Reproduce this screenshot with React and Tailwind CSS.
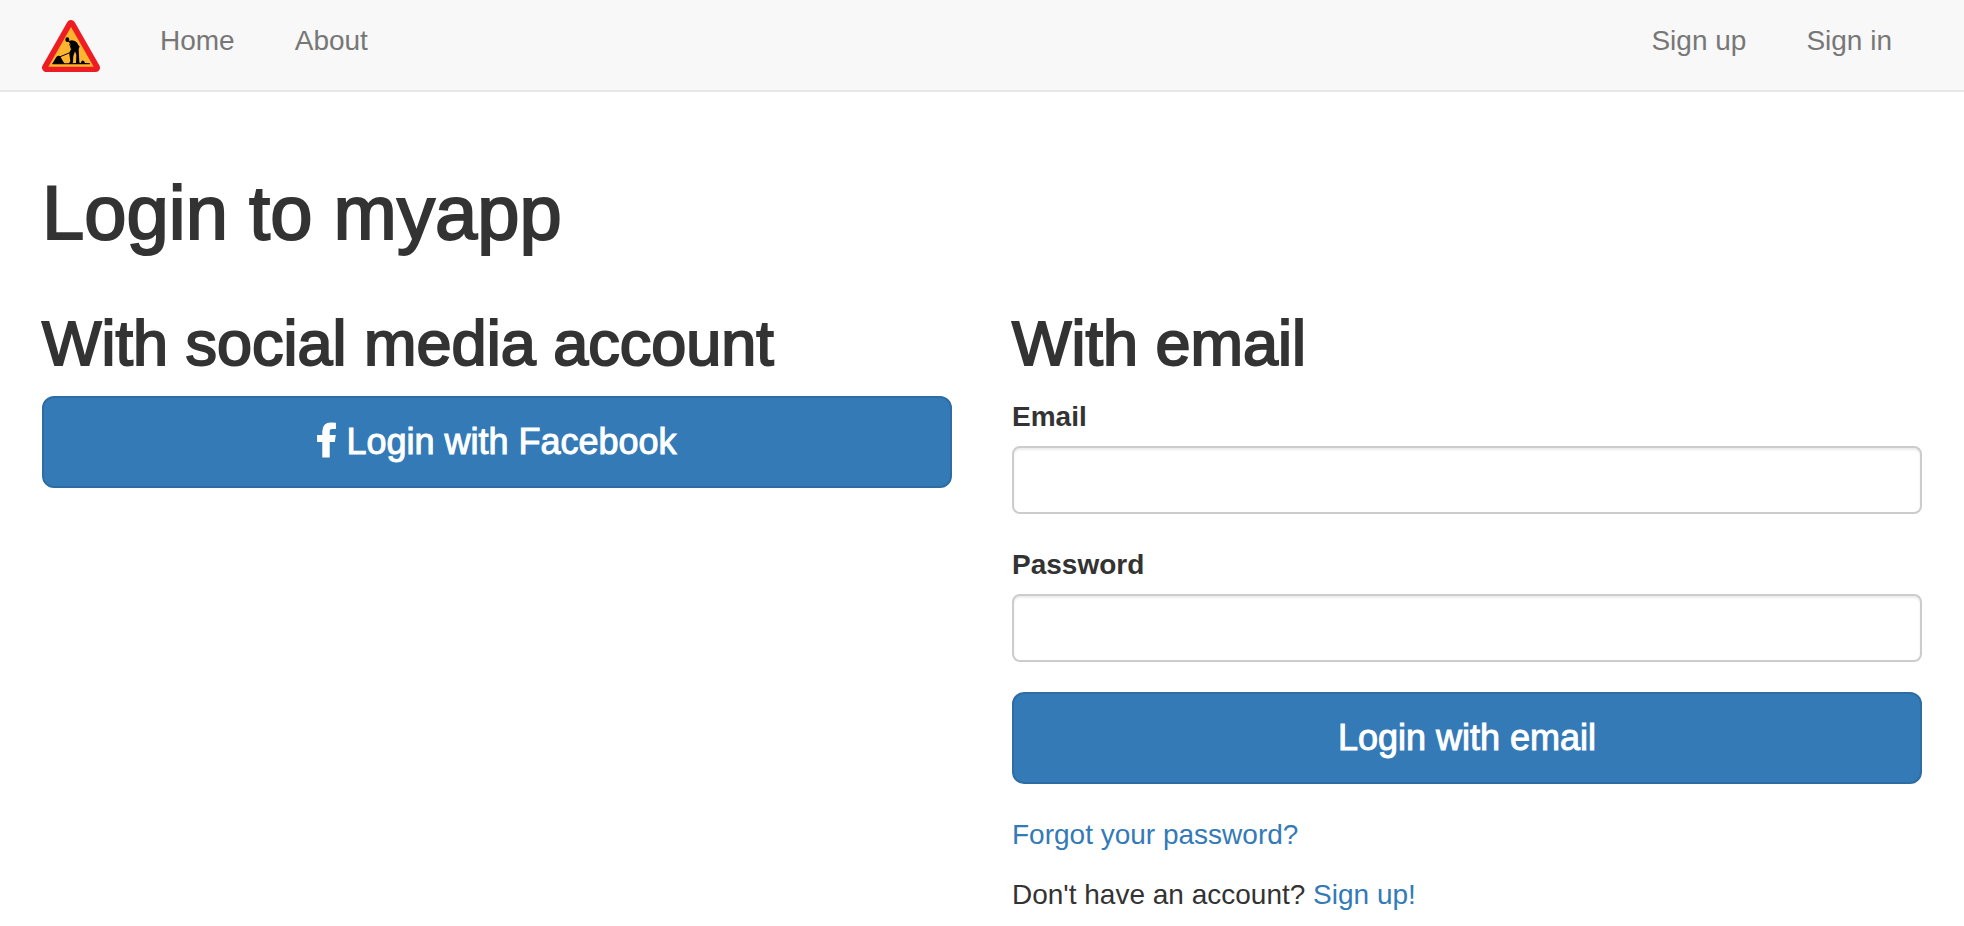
const linkClass = "text-[#337ab7] hover:underline";
const navLinkClass = "block pt-[21px] pb-[19px] text-[#777777] hover:text-[#333333]";
const headingClass = "text-[63px] leading-[66px] font-normal [-webkit-text-stroke:2px_#333333]";
const labelClass = "block font-bold pt-px mb-[9px]";
const inputClass =
  "block w-full h-[68px] px-6 rounded-lg border-2 border-[#cccccc] bg-white shadow-[inset_0_2px_2px_rgba(0,0,0,0.075)] outline-none focus:border-[#66afe9]";
const buttonClass =
  "flex w-full h-[92px] items-center justify-center gap-[10px] rounded-xl border-2 border-[#2e6da4] bg-[#337ab7] text-[36px] leading-[48px] text-white [-webkit-text-stroke:1px_#ffffff] hover:bg-[#286090]";

function RoadworksLogo() {
  return (
    <svg viewBox="0 0 174 156" className="block w-[58px] h-[52px]" role="img" aria-label="myapp">
      <path
        d="M87 13 13 143H161Z"
        fill="#ee1c23"
        stroke="#ee1c23"
        strokeWidth="26"
        strokeLinejoin="round"
      />
      <path d="M87 21 19 140H155Z" fill="#ffb52e" />
      <g fill="#000000">
        <path d="M31 131 43 111Q48 105 54 108L63 124 68 131Z" />
        <path d="M31 130H82L104 129H116L119 123Q122 120 126 123L129 129 144 130V133H31Z" />
        <ellipse cx="76" cy="59" rx="6" ry="7" />
        <path d="M78 63 90 61 99 63Q107 67 109 76L113 79 110 88 112 127 115 130H102L103 105 99 94 94 108 93 126 91 131H80L85 124 82 103 84 93 88 87 86 74Z" />
      </g>
      <path d="M83 72 88 87M50 112 86 97 110 78" fill="none" stroke="#000000" strokeWidth="3" />
    </svg>
  );
}

function FacebookIcon() {
  return (
    <svg
      viewBox="449 -30 924 1724"
      className="w-[19px] h-[36px] -mt-1"
      fill="currentColor"
      stroke="currentColor"
      strokeWidth="50"
      aria-hidden="true"
    >
      <path d="M1343 12v264h-157q-86 0-116 36t-30 108v189h293l-39 296h-254v759h-306v-759h-255v-296h255v-218q0-186 104-288.5t277-102.5q147 0 228 12z" />
    </svg>
  );
}

function Navbar() {
  return (
    <nav className="flex items-start justify-between h-[92px] pl-[42px] pr-[72px] bg-[#f8f8f8] border-b-2 border-[#e7e7e7]">
      <div className="flex items-start gap-[60px]">
        <a href="#" className="pt-5">
          <RoadworksLogo />
        </a>
        <ul className="flex gap-[60px]">
          <li><a href="#home" className={navLinkClass}>Home</a></li>
          <li><a href="#about" className={navLinkClass}>About</a></li>
        </ul>
      </div>
      <ul className="flex gap-[60px]">
        <li><a href="#signup" className={navLinkClass}>Sign up</a></li>
        <li><a href="#signin" className={navLinkClass}>Sign in</a></li>
      </ul>
    </nav>
  );
}

export default function App() {
  return (
    <div className="font-['Liberation_Sans',Arial,sans-serif] text-[28px] leading-[40px] text-[#333333] bg-white">
      <Navbar />
      <main className="px-[42px] pt-[82px] pb-3">
        <h1 className="text-[76px] leading-[78px] font-normal [-webkit-text-stroke:2px_#333333]">
          Login to myapp
        </h1>
        <div className="grid grid-cols-2 gap-[60px] mt-[58px]">
          <section>
            <h2 className={headingClass}>With social media account</h2>
            <button type="button" className={`${buttonClass} mt-5`}>
              <FacebookIcon />
              Login with Facebook
            </button>
          </section>
          <section>
            <h2 className={headingClass}>With email</h2>
            <form className="mt-5" onSubmit={(event) => event.preventDefault()}>
              <label htmlFor="email" className={labelClass}>Email</label>
              <input id="email" type="email" className={`${inputClass} mb-[30px]`} />
              <label htmlFor="password" className={labelClass}>Password</label>
              <input id="password" type="password" className={`${inputClass} mb-[30px]`} />
              <button type="submit" className={buttonClass}>Login with email</button>
            </form>
            <p className="mt-[31px]">
              <a href="#forgot" className={linkClass}>Forgot your password?</a>
            </p>
            <p className="mt-5">
              Don't have an account? <a href="#signup" className={linkClass}>Sign up!</a>
            </p>
          </section>
        </div>
      </main>
    </div>
  );
}
